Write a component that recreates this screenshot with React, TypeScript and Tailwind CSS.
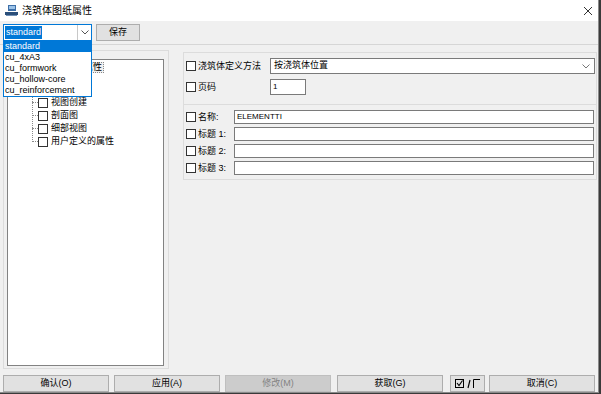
import React from 'react';

const font = "font-['Liberation_Sans','Noto_Sans_CJK_SC',sans-serif]";

const Check = ({ className = '' }: { className?: string }) => (
  <span className={`inline-block w-[10px] h-[10px] bg-white border border-[#333333] shrink-0 ${className}`} />
);

const Chevron = ({ color = '#555555' }: { color?: string }) => (
  <svg width="8" height="5" viewBox="0 0 8 5">
    <path d="M0.5 0.5 L4 4 L7.5 0.5" fill="none" stroke={color} strokeWidth="1" />
  </svg>
);

const Btn = ({ label, disabled = false, w = 'w-[106px]' }: { label: string; disabled?: boolean; w?: string }) => (
  <div
    className={`${w} h-[17px] flex items-center justify-center text-[9px] border ${
      disabled ? 'bg-[#cccccc] border-[#bfbfbf] text-[#838383]' : 'bg-[#e1e1e1] border-[#adadad] text-black'
    }`}
  >
    {label}
  </div>
);

const TextRow = ({ label, value = '' }: { label: string; value?: string }) => (
  <div className="flex items-center h-[14px]">
    <Check />
    <span className="ml-[2px] w-[36px] text-[9px] leading-none">{label}</span>
    <div className="flex-1 h-[14px] bg-white border border-[#7a7a7a] flex items-center px-[2px] text-[8px] mr-[1px]">
      {value}
    </div>
  </div>
);

const treeItems = ['视图创建', '剖面图', '细部视图', '用户定义的属性'];
const options = ['standard', 'cu_4xA3', 'cu_formwork', 'cu_hollow-core', 'cu_reinforcement'];

export default function App() {
  return (
    <div className={`w-[601px] h-[394px] bg-[#3a3a3a] ${font} text-black`}>
      <div className="w-[599px] h-[393px] bg-[#f0f0f0] border-r border-b border-[#8a8a8a] flex flex-col relative">
        {/* title bar */}
        <div className="h-[21px] bg-white flex items-center shrink-0">
          <svg className="ml-[5px]" width="13" height="12" viewBox="0 0 13 12">
            <rect x="3" y="0" width="8" height="6" fill="#3d6fa8" />
            <rect x="4" y="1" width="6" height="3" fill="#9cc3e8" />
            <rect x="0" y="7" width="13" height="3" fill="#2b4f7a" />
            <rect x="1" y="10" width="11" height="1" fill="#6f8fb5" />
          </svg>
          <span className="ml-[4px] text-[10px]">浇筑体图纸属性</span>
          <svg className="ml-auto mr-[5px]" width="10" height="10" viewBox="0 0 10 10">
            <path d="M1 1 L9 9 M9 1 L1 9" stroke="#333333" strokeWidth="1" />
          </svg>
        </div>

        {/* toolbar */}
        <div className="h-[24px] border-b border-[#d6d6d6] flex items-start pt-[3px] pl-[3px] shrink-0">
          <div className="w-[89px] h-[17px] bg-white border border-[#0078d7] flex items-center">
            <span className="ml-[1px] h-[13px] px-[1px] bg-[#0078d7] text-white text-[9px] leading-[13px]">standard</span>
            <div className="ml-auto w-[14px] h-full border-l border-[#c8c8c8] flex items-center justify-center">
              <Chevron />
            </div>
          </div>
          <div className="ml-[4px] w-[44px] h-[17px] bg-[#e1e1e1] border border-[#adadad] flex items-center justify-center text-[9px]">
            保存
          </div>
        </div>

        {/* dropdown list */}
        <div className="absolute left-[3px] top-[40px] w-[89px] bg-white border border-[#0078d7] flex flex-col z-10">
          {options.map((o, i) => (
            <div
              key={o}
              className={`h-[11px] px-[1px] text-[9px] leading-[11px] ${i === 0 ? 'bg-[#0078d7] text-white' : 'text-black'}`}
            >
              {o}
            </div>
          ))}
        </div>

        {/* main */}
        <div className="h-[327px] flex shrink-0">
          <div className="ml-[3px] mt-[5px] w-[166px] h-[319px] border border-[#dcdcdc] pl-[3px] pt-[8px] pr-[4px] pb-[2px]">
            <div className="w-full h-full bg-white border border-[#828282] relative pt-[2px]">
              <div className="flex items-center h-[11px]">
                <span className="ml-[29px] px-[1px] border border-dotted border-[#888888] bg-[#f0f0f0] text-[9px] leading-[9px]">
                  浇筑体图纸属性
                </span>
              </div>
              <div className="relative mt-[23px] ml-[24px] flex flex-col">
                <div className="absolute left-0 top-[-24px] h-[68px] border-l border-dotted border-[#8a8a8a]" />
                {treeItems.map((t) => (
                  <div key={t} className="flex items-center h-[13px]">
                    <span className="w-[6px] border-t border-dotted border-[#8a8a8a]" />
                    <Check className="w-[9px] h-[9px]" />
                    <span className="ml-[3px] text-[9px] leading-none">{t}</span>
                  </div>
                ))}
              </div>
            </div>
          </div>

          <div className="ml-[14px] mt-[7px] w-[414px] flex flex-col">
            <div className="h-[53px] border border-[#dcdcdc] pl-[2px] pr-[1px] pt-[5px] flex flex-col gap-[5px]">
              <div className="flex items-center h-[16px]">
                <Check />
                <span className="ml-[2px] w-[72px] text-[9px] leading-none">浇筑体定义方法</span>
                <div className="flex-1 h-[16px] bg-white border border-[#7a7a7a] flex items-center pl-[3px] pr-[4px] text-[9px]">
                  按浇筑体位置
                  <span className="ml-auto">
                    <Chevron color="#777777" />
                  </span>
                </div>
              </div>
              <div className="flex items-center h-[16px]">
                <Check />
                <span className="ml-[2px] w-[72px] text-[9px] leading-none">页码</span>
                <div className="w-[36px] h-[16px] bg-white border border-[#7a7a7a] flex items-center pl-[2px] text-[8px]">
                  1
                </div>
              </div>
            </div>
            <div className="h-[75px] border border-[#dcdcdc] border-t-0 pl-[2px] pr-[1px] pt-[5px] flex flex-col gap-[3px]">
              <TextRow label="名称:" value="ELEMENTTI" />
              <TextRow label="标题 1:" />
              <TextRow label="标题 2:" />
              <TextRow label="标题 3:" />
            </div>
          </div>
        </div>

        {/* buttons */}
        <div className="flex items-center pt-[3px] pl-[3px]">
          <Btn label="确认(O)" />
          <div className="ml-[5px]"><Btn label="应用(A)" /></div>
          <div className="ml-[5px]"><Btn label="修改(M)" disabled /></div>
          <div className="ml-[6px]"><Btn label="获取(G)" /></div>
          <div className="ml-[7px] w-[35px] h-[17px] bg-[#e1e1e1] border border-[#adadad] flex items-center justify-center">
            <svg width="25" height="10" viewBox="0 0 25 10">
              <rect x="0.5" y="0.5" width="8" height="8" fill="none" stroke="#000" />
              <path d="M2 4 L4 6.5 L7.5 1.5" fill="none" stroke="#000" strokeWidth="1.1" />
              <path d="M13 9 L15 1" stroke="#000" strokeWidth="1.2" />
              <path d="M18.5 9 L18.5 0.5 L25 0.5" fill="none" stroke="#000" />
            </svg>
          </div>
          <div className="ml-[4px]"><Btn label="取消(C)" /></div>
        </div>
      </div>
    </div>
  );
}
